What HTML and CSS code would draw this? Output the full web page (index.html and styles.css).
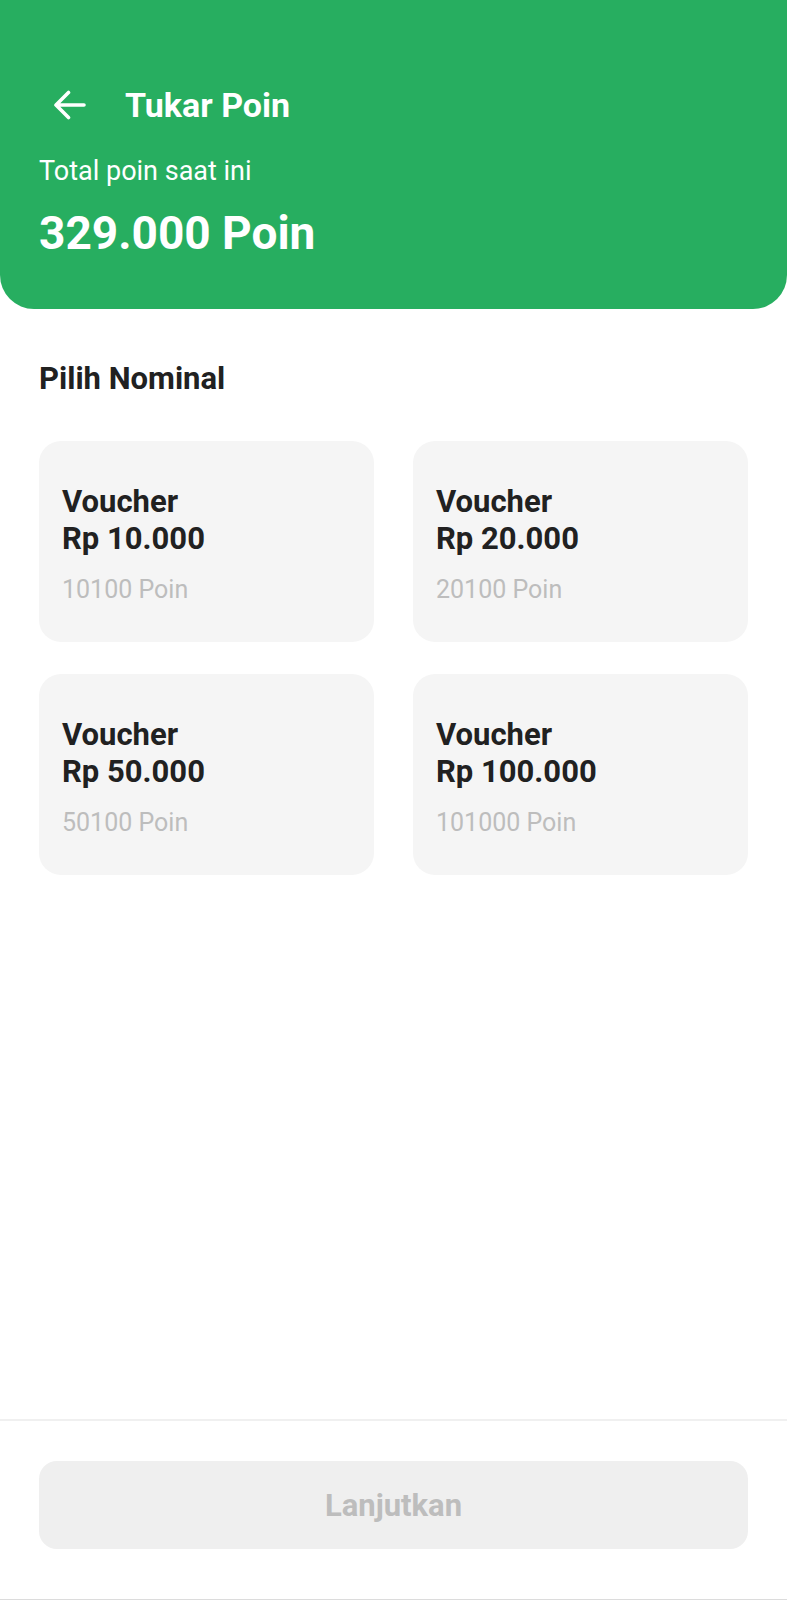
FILE: index.html
```html
<!DOCTYPE html>
<html lang="id">
<head>
<meta charset="utf-8">
<title>Tukar Poin</title>
<link rel="stylesheet" href="styles.css">
</head>
<body>
<div class="screen">
  <header class="header">
    <div class="toolbar">
      <svg class="back" width="34" height="30" viewBox="0 0 34 30" aria-hidden="true">
        <path d="M31 15H3.5M15.5 2.5L3 15l12.5 12.5" fill="none" stroke="#fff" stroke-width="3.6" stroke-linecap="round" stroke-linejoin="round"/>
      </svg>
      <h1 class="title">Tukar Poin</h1>
    </div>
    <p class="label">Total poin saat ini</p>
    <p class="total">329.000 Poin</p>
  </header>

  <main class="content">
    <h2 class="section-title">Pilih Nominal</h2>
    <div class="grid">
      <div class="card">
        <div class="card-name">Voucher<br>Rp 10.000</div>
        <div class="card-cost">10100 Poin</div>
      </div>
      <div class="card">
        <div class="card-name">Voucher<br>Rp 20.000</div>
        <div class="card-cost">20100 Poin</div>
      </div>
      <div class="card">
        <div class="card-name">Voucher<br>Rp 50.000</div>
        <div class="card-cost">50100 Poin</div>
      </div>
      <div class="card">
        <div class="card-name">Voucher<br>Rp 100.000</div>
        <div class="card-cost">101000 Poin</div>
      </div>
    </div>
  </main>

  <footer class="footer">
    <button class="btn" type="button" disabled>Lanjutkan</button>
  </footer>
</div>
</body>
</html>
```

FILE: styles.css
```css
* { box-sizing: border-box; }

html, body {
  margin: 0;
  padding: 0;
  background: #ffffff;
}

body {
  font-family: Roboto, "Liberation Sans", Arial, sans-serif;
  color: #212121;
}

.screen {
  width: 787px;
  height: 1600px;
  display: flex;
  flex-direction: column;
  border-bottom: 1px solid #dcdcdc;
}

.header {
  background: #27ae60;
  color: #ffffff;
  height: 309px;
  padding: 82px 39px 0;
  border-radius: 0 0 34px 34px;
}

.toolbar {
  display: flex;
  align-items: center;
  height: 46px;
}

.back {
  margin-left: 14px;
  display: block;
}

.title {
  margin: 0 0 0 38px;
  font-size: 34px;
  font-weight: 700;
  line-height: 46px;
}

.label {
  margin: 26px 0 0;
  font-size: 27px;
  line-height: 34px;
  font-weight: 400;
}

.total {
  margin: 18px 0 0;
  font-size: 46px;
  line-height: 54px;
  font-weight: 700;
}

.content {
  flex: 1;
  padding: 52px 39px 0;
}

.section-title {
  margin: 0;
  font-size: 31px;
  line-height: 36px;
  font-weight: 700;
  color: #212121;
}

.grid {
  margin-top: 44px;
  display: grid;
  grid-template-columns: 1fr 1fr;
  column-gap: 39px;
  row-gap: 32px;
}

.card {
  background: #f5f5f5;
  border-radius: 22px;
  height: 201px;
  padding: 42px 23px 0;
}

.card-name {
  font-size: 31px;
  line-height: 37px;
  font-weight: 700;
  color: #212121;
}

.card-cost {
  margin-top: 19px;
  font-size: 25px;
  line-height: 28px;
  color: #bdbdbd;
}

.footer {
  border-top: 2px solid #f0f0f0;
  padding: 40px 39px 50px;
}

.btn {
  display: block;
  width: 100%;
  height: 88px;
  border: none;
  border-radius: 18px;
  background: #efefef;
  color: #bdbdbd;
  font-family: Roboto, "Liberation Sans", Arial, sans-serif;
  font-size: 31px;
  font-weight: 700;
}
```
